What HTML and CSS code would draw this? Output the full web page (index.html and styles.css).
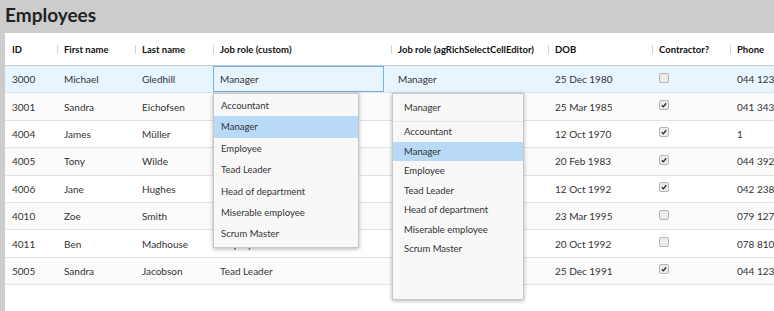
FILE: index.html
```html
<!DOCTYPE html>
<html lang="en">
<head>
    <meta charset="UTF-8">
    <meta name="viewport" content="width=device-width, initial-scale=1.0">
    <title>Employees</title>
    <link rel="stylesheet" href="styles.css">
</head>
<body>

    <h1 class="title">Employees</h1>

    <div class="grid">
        <!-- Header -->
        <div class="grid-row grid-header">
            <div class="cell">ID</div>
            <div class="cell sep">First name</div>
            <div class="cell sep">Last name</div>
            <div class="cell sep">Job role (custom)</div>
            <div class="cell sep">Job role (agRichSelectCellEditor)</div>
            <div class="cell sep">DOB</div>
            <div class="cell sep">Contractor?</div>
            <div class="cell sep">Phone</div>
        </div>

        <!-- Rows -->
        <div class="grid-row selected">
            <div class="cell">3000</div>
            <div class="cell">Michael</div>
            <div class="cell">Gledhill</div>
            <div class="cell editor-cell"><div class="editor">Manager</div></div>
            <div class="cell">Manager</div>
            <div class="cell">25 Dec 1980</div>
            <div class="cell"><span class="check"></span></div>
            <div class="cell">044 123 4567</div>
        </div>
        <div class="grid-row odd">
            <div class="cell">3001</div>
            <div class="cell">Sandra</div>
            <div class="cell">Eichofsen</div>
            <div class="cell">Accountant</div>
            <div class="cell">Accountant</div>
            <div class="cell">25 Mar 1985</div>
            <div class="cell"><span class="check on"><svg viewBox="0 0 9 9"><path d="M2 4.8 L3.8 6.5 L7 2.5" /></svg></span></div>
            <div class="cell">041 343 2222</div>
        </div>
        <div class="grid-row">
            <div class="cell">4004</div>
            <div class="cell">James</div>
            <div class="cell">Müller</div>
            <div class="cell">Employee</div>
            <div class="cell">Employee</div>
            <div class="cell">12 Oct 1970</div>
            <div class="cell"><span class="check on"><svg viewBox="0 0 9 9"><path d="M2 4.8 L3.8 6.5 L7 2.5" /></svg></span></div>
            <div class="cell">1</div>
        </div>
        <div class="grid-row odd">
            <div class="cell">4005</div>
            <div class="cell">Tony</div>
            <div class="cell">Wilde</div>
            <div class="cell">Employee</div>
            <div class="cell">Employee</div>
            <div class="cell">20 Feb 1983</div>
            <div class="cell"><span class="check on"><svg viewBox="0 0 9 9"><path d="M2 4.8 L3.8 6.5 L7 2.5" /></svg></span></div>
            <div class="cell">044 392 3333</div>
        </div>
        <div class="grid-row">
            <div class="cell">4006</div>
            <div class="cell">Jane</div>
            <div class="cell">Hughes</div>
            <div class="cell">Head of department</div>
            <div class="cell">Head of department</div>
            <div class="cell">12 Oct 1992</div>
            <div class="cell"><span class="check on"><svg viewBox="0 0 9 9"><path d="M2 4.8 L3.8 6.5 L7 2.5" /></svg></span></div>
            <div class="cell">042 238 2222</div>
        </div>
        <div class="grid-row odd">
            <div class="cell">4010</div>
            <div class="cell">Zoe</div>
            <div class="cell">Smith</div>
            <div class="cell">Miserable employee</div>
            <div class="cell">Miserable employee</div>
            <div class="cell">23 Mar 1995</div>
            <div class="cell"><span class="check"></span></div>
            <div class="cell">079 127 2222</div>
        </div>
        <div class="grid-row">
            <div class="cell">4011</div>
            <div class="cell">Ben</div>
            <div class="cell">Madhouse</div>
            <div class="cell">Employee</div>
            <div class="cell">Employee</div>
            <div class="cell">20 Oct 1992</div>
            <div class="cell"><span class="check"></span></div>
            <div class="cell">078 810 2222</div>
        </div>
        <div class="grid-row odd">
            <div class="cell">5005</div>
            <div class="cell">Sandra</div>
            <div class="cell">Jacobson</div>
            <div class="cell">Tead Leader</div>
            <div class="cell">Tead Leader</div>
            <div class="cell">25 Dec 1991</div>
            <div class="cell"><span class="check on"><svg viewBox="0 0 9 9"><path d="M2 4.8 L3.8 6.5 L7 2.5" /></svg></span></div>
            <div class="cell">044 123 1111</div>
        </div>

        <!-- Custom editor dropdown -->
        <ul class="custom-list">
            <li>Accountant</li>
            <li class="active">Manager</li>
            <li>Employee</li>
            <li>Tead Leader</li>
            <li>Head of department</li>
            <li>Miserable employee</li>
            <li>Scrum Master</li>
        </ul>

        <!-- Rich select popup -->
        <div class="rich-select">
            <div class="rich-value">Manager</div>
            <ul class="rich-list">
                <li>Accountant</li>
                <li class="active">Manager</li>
                <li>Employee</li>
                <li>Tead Leader</li>
                <li>Head of department</li>
                <li>Miserable employee</li>
                <li>Scrum Master</li>
            </ul>
        </div>
    </div>

</body>
</html>
```

FILE: styles.css
```css
body {
    margin: 0;
    background-color: #cccccc;
    font-family: 'Lato', 'Open Sans', sans-serif;
    font-size: 10px;
    color: #333;
    overflow: hidden;
}

.title {
    margin: 0;
    height: 33px;
    padding-left: 5px;
    font-size: 19px;
    font-weight: 700;
    line-height: 30px;
    color: #222;
}

.grid {
    position: relative;
    margin-left: 5px;
    height: 278px;
    background-color: #fff;
    overflow: hidden;
}

.grid-row {
    display: grid;
    grid-template-columns: 52px 78px 78px 178px 157px 104px 78px 120px;
    height: 27.4px;
    box-sizing: border-box;
    border-bottom: 1px solid #dde2eb;
    white-space: nowrap;
}

.grid-row.odd {
    background-color: #fbfbfb;
}

.grid-row.selected {
    background-color: #e8f4fe;
}

.grid-header {
    height: 33px;
    border-bottom: 1px solid #c4c9ce;
    background-color: #fff;
    font-size: 9.5px;
    font-weight: 700;
    color: #111;
}

.cell {
    display: flex;
    align-items: center;
    padding-left: 7px;
    overflow: hidden;
}

.grid-header .sep {
    position: relative;
}

.grid-header .sep::before {
    content: "";
    position: absolute;
    left: 0;
    top: 12px;
    height: 9px;
    width: 1px;
    background-color: #d3d3d3;
}

/* Editing cell */
.editor-cell {
    padding-left: 0;
    align-items: stretch;
}

.editor {
    width: 171px;
    box-sizing: border-box;
    border: 1px solid #73b2e8;
    padding-left: 6px;
    display: flex;
    align-items: center;
    background-color: #e8f4fe;
}

/* Checkbox */
.check {
    display: inline-block;
    width: 8px;
    height: 8px;
    margin-top: -3px;
    border: 1px solid #b5b5b5;
    border-radius: 2px;
    background-color: #ececec;
}

.check svg {
    display: block;
    width: 8px;
    height: 8px;
}

.check svg path {
    fill: none;
    stroke: #333;
    stroke-width: 1.5;
}

/* Custom dropdown */
.custom-list {
    position: absolute;
    left: 208px;
    top: 60px;
    width: 144px;
    margin: 0;
    padding: 1px 0 2px;
    list-style: none;
    background-color: #f8f8f8;
    border: 1px solid #c8c8c8;
    box-shadow: 0 1px 4px rgba(0, 0, 0, 0.3);
    font-size: 9.5px;
}

.custom-list li {
    height: 21.4px;
    line-height: 21.4px;
    padding-left: 7px;
}

.custom-list li.active,
.rich-list li.active {
    background-color: #b8daf6;
}

/* Rich select popup */
.rich-select {
    position: absolute;
    left: 387px;
    top: 60px;
    width: 130px;
    height: 205px;
    background-color: #f8f8f8;
    border: 1px solid #c8c8c8;
    box-shadow: 0 1px 4px rgba(0, 0, 0, 0.3);
    font-size: 9.5px;
}

.rich-value {
    height: 27px;
    line-height: 27px;
    padding-left: 11px;
    border-bottom: 1px solid #e6e6e6;
}

.rich-list {
    margin: 0;
    padding: 0;
    list-style: none;
}

.rich-list li {
    height: 19.5px;
    line-height: 19.5px;
    padding-left: 11px;
}
```
